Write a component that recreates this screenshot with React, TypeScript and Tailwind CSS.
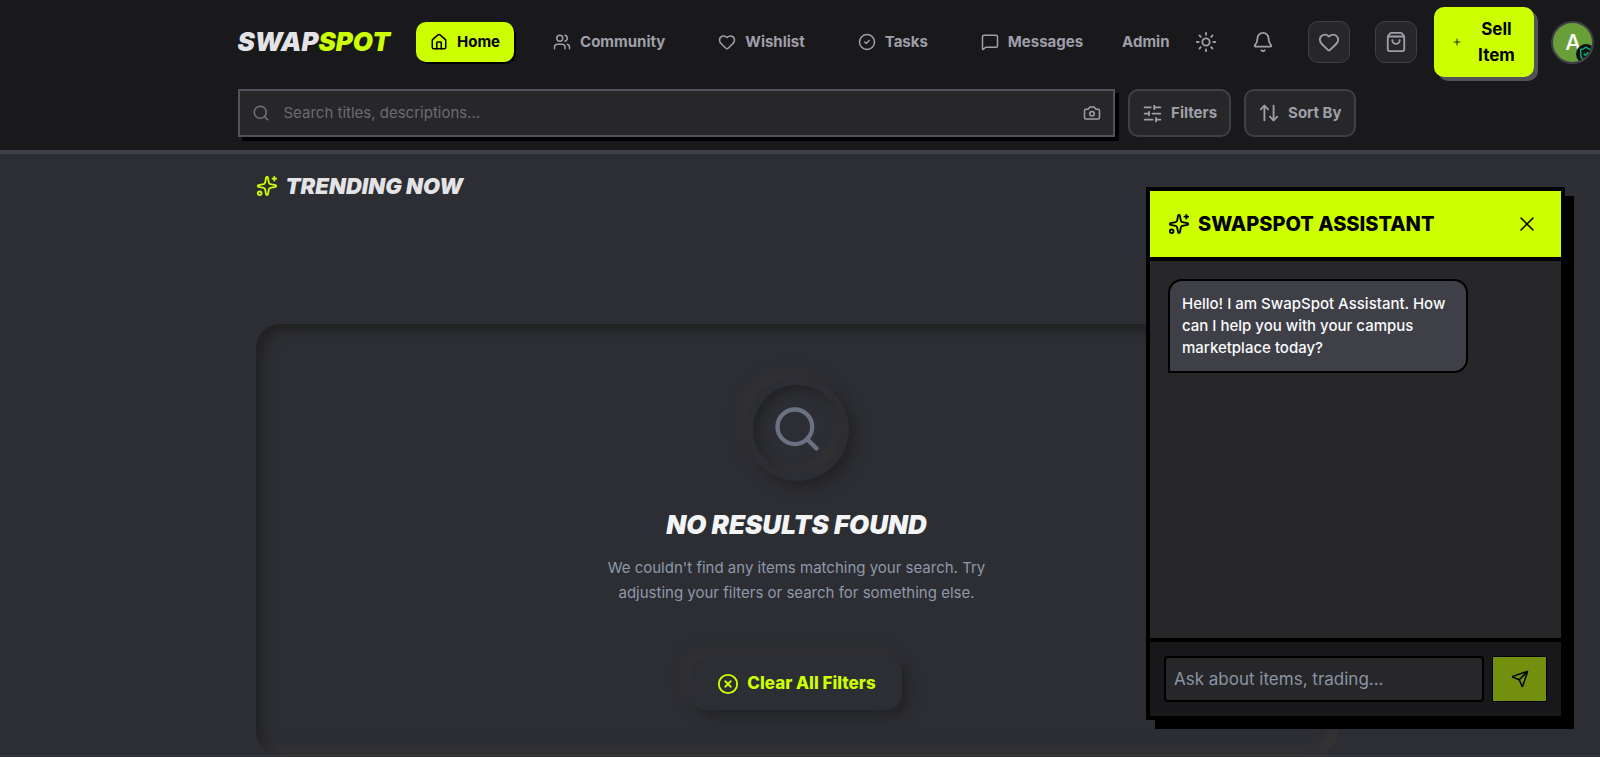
import {
  ArrowUpDown,
  Bell,
  Camera,
  CircleCheck,
  CircleX,
  Heart,
  House,
  MessageSquare,
  Plus,
  Search,
  Send,
  ShieldCheck,
  ShoppingBag,
  SlidersHorizontal,
  Sparkles,
  Sun,
  Users,
  X,
} from "lucide-react";

const navItems = [
  { label: "Home", icon: House, active: true },
  { label: "Community", icon: Users },
  { label: "Wishlist", icon: Heart },
  { label: "Tasks", icon: CircleCheck },
  { label: "Messages", icon: MessageSquare },
];

function Header() {
  return (
    <header className="border-b-4 border-zinc-700 bg-[#19191b] pr-[7px] pt-[7px] pb-[13px]">
      <div className="mx-auto w-full max-w-[1118px]">
        <div className="flex h-[70px] items-center whitespace-nowrap">
          <a href="#" className="mr-[26px] shrink-0 text-[26px] leading-8 font-black italic text-zinc-200">
            SWAP<span className="text-[#ccff00]">SPOT</span>
          </a>

          <nav className="flex shrink-0 items-center gap-[25px] text-[15px] font-bold">
            {navItems.map(({ label, icon: Icon, active }) => (
              <a
                key={label}
                href="#"
                className={
                  active
                    ? "flex h-10 items-center gap-[9px] rounded-[10px] bg-[#ccff00] px-3.5 text-black shadow-[2px_2px_0_#000]"
                    : "flex h-10 items-center gap-[9px] rounded-[10px] px-3.5 text-zinc-400"
                }
              >
                <Icon size={18} strokeWidth={2} />
                {label}
              </a>
            ))}
            <a href="#" className="text-zinc-400">
              Admin
            </a>
          </nav>

          <div className="ml-[25px] flex shrink-0 items-center gap-[25px] text-zinc-400">
            <button aria-label="Toggle theme" className="flex size-6 items-center justify-center">
              <Sun size={22} strokeWidth={2} />
            </button>
            <button aria-label="Notifications" className="flex size-10 items-center justify-center">
              <Bell size={22} strokeWidth={2} />
            </button>
            <button
              aria-label="Favourites"
              className="flex size-[42px] items-center justify-center rounded-[10px] border border-zinc-700 bg-[#27272a]"
            >
              <Heart size={22} strokeWidth={2} />
            </button>
            <button
              aria-label="Bag"
              className="flex size-[42px] items-center justify-center rounded-[10px] border border-zinc-700 bg-[#27272a]"
            >
              <ShoppingBag size={22} strokeWidth={2} />
            </button>
          </div>

          <button className="ml-[17px] flex h-[70px] w-[100px] shrink-0 items-center gap-3.5 rounded-[10px] bg-[#ccff00] px-4.5 text-[17px] leading-[26px] font-bold text-black shadow-[4px_4px_0_#52525b]">
            <Plus size={10} strokeWidth={2} className="shrink-0" />
            <span className="whitespace-normal">Sell Item</span>
          </button>

          <button
            aria-label="Account"
            className="relative ml-[17px] flex size-[43px] shrink-0 items-center justify-center overflow-hidden rounded-full border-2 border-zinc-700 bg-[#689f38] text-[22px] font-medium text-white"
          >
            A
            <span className="absolute -right-1 -bottom-0.5 flex size-5 items-center justify-center rounded-full bg-[#111113] text-emerald-500">
              <ShieldCheck size={16} />
            </span>
          </button>
        </div>

        <div className="mt-3 flex gap-[13px]">
          <label className="flex h-12 flex-1 items-center gap-3.5 border-2 border-zinc-600 bg-[#27272a] px-3 text-zinc-500 shadow-[4px_4px_0_#000]">
            <Search size={18} strokeWidth={2} />
            <input
              type="text"
              aria-label="Search"
              placeholder="Search titles, descriptions..."
              className="min-w-0 flex-1 bg-transparent text-[15px] outline-none placeholder:text-[#6b6b73]"
            />
            <button aria-label="Search by image" className="text-zinc-400">
              <Camera size={18} strokeWidth={2} />
            </button>
          </label>
          <button className="flex h-12 items-center gap-2 rounded-[10px] border-2 border-zinc-700 bg-[#27272a] px-3 text-[15px] font-bold text-zinc-400">
            <SlidersHorizontal size={21} strokeWidth={2} />
            Filters
          </button>
          <button className="flex h-12 items-center gap-2 rounded-[10px] border-2 border-zinc-700 bg-[#27272a] px-3 text-[15px] font-bold text-zinc-400">
            <ArrowUpDown size={22} strokeWidth={2} />
            Sort By
          </button>
        </div>
      </div>
    </header>
  );
}

function EmptyState() {
  return (
    <section className="mt-[122px] flex flex-col items-center rounded-3xl pt-[53px] pb-[45px] shadow-[inset_6px_6px_12px_#202121,inset_-6px_-6px_12px_#363637]">
      <div className="flex size-26 items-center justify-center rounded-full bg-[#2d2e33] p-2 shadow-[6px_6px_12px_#222326,-6px_-6px_12px_#333335]">
        <div className="flex size-full items-center justify-center rounded-full text-gray-500 shadow-[inset_5px_5px_10px_#222326,inset_-5px_-5px_10px_#333335]">
          <Search size={52} strokeWidth={2} />
        </div>
      </div>
      <h2 className="mt-7 text-[26px] leading-8 font-black italic text-gray-100">NO RESULTS FOUND</h2>
      <p className="mt-3.5 w-[400px] text-center text-[15px] leading-[25px] text-[#8f98a8]">
        We couldn't find any items matching your search. Try adjusting your filters or search for something else.
      </p>
      <button className="mt-[52px] flex h-[53px] items-center gap-2 rounded-2xl bg-[#2d2e33] px-[26px] text-[17px] font-extrabold text-[#ccff00] shadow-[6px_6px_12px_#222326,-6px_-6px_12px_#333335]">
        <CircleX size={22} />
        Clear All Filters
      </button>
    </section>
  );
}

function Assistant() {
  return (
    <aside className="fixed right-[35px] bottom-[37px] flex h-[533px] w-[419px] flex-col border-4 border-black bg-[#27272a] shadow-[9px_9px_0_#000]">
      <div className="flex h-[70px] items-center gap-2 border-b-4 border-black bg-[#ccff00] px-[18px] text-black">
        <Sparkles size={22} strokeWidth={2} />
        <h2 className="flex-1 text-xl font-extrabold">SWAPSPOT ASSISTANT</h2>
        <button aria-label="Close assistant" className="mr-1">
          <X size={24} strokeWidth={1.5} />
        </button>
      </div>

      <div className="flex-1 p-[18px]">
        <p className="w-[300px] rounded-[14px] rounded-bl-none border-2 border-black bg-zinc-700 px-3 py-3 text-[15px] leading-[22px] font-medium text-gray-50">
          Hello! I am SwapSpot Assistant. How can I help you with your campus marketplace today?
        </p>
      </div>

      <form className="flex gap-2 border-t-4 border-black bg-[#18181b] p-3.5">
        <input
          type="text"
          aria-label="Message"
          placeholder="Ask about items, trading..."
          className="h-[46px] min-w-0 flex-1 rounded border-2 border-black bg-[#27272a] px-2 text-[17px] text-white outline-none placeholder:text-[#8b93a1]"
        />
        <button
          type="button"
          aria-label="Send"
          className="flex h-[46px] w-[55px] items-center justify-center border border-black bg-[#728f0e] text-black"
        >
          <Send size={18} strokeWidth={2} />
        </button>
      </form>
    </aside>
  );
}

export default function App() {
  return (
    <div className="h-screen overflow-hidden bg-[#2d2e33] font-['Inter',sans-serif]">
      <Header />
      <main className="border-b border-[#38393f] pr-[7px]">
        <div className="mx-auto w-full max-w-[1082px] pt-4">
          <h1 className="flex items-center gap-2 text-[22px] leading-8 font-black italic text-zinc-200">
            <Sparkles size={22} className="text-[#ccff00]" />
            TRENDING NOW
          </h1>
          <EmptyState />
        </div>
      </main>
      <Assistant />
    </div>
  );
}
